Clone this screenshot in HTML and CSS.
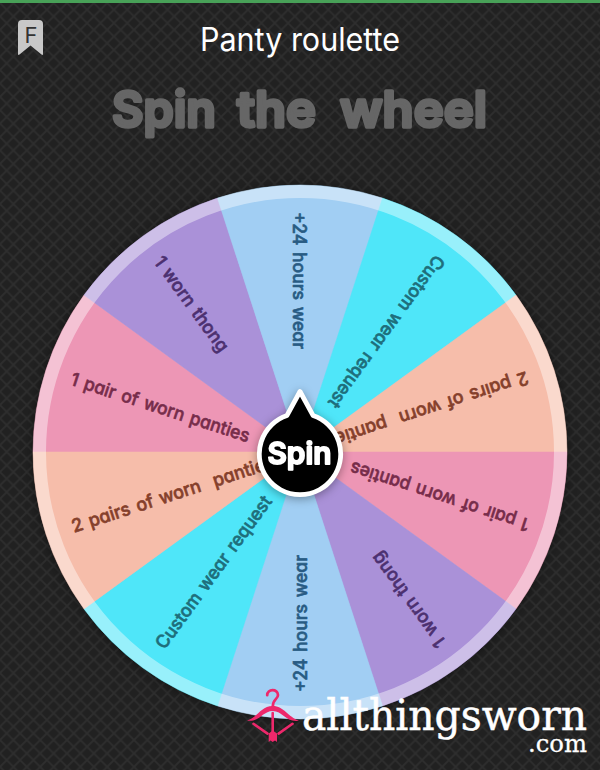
FILE: index.html
```html
<!DOCTYPE html>
<html lang="en">

<head>
  <meta charset="UTF-8">
  <meta name="viewport" content="width=device-width, initial-scale=1.0">
  <title>Panty roulette</title>
  <link rel="stylesheet" href="styles.css">
</head>

<body>
  <svg class="pattern" width="600" height="770">
    <defs>
      <pattern id="mesh" width="13.4" height="13.4" patternUnits="userSpaceOnUse">
        <path d="M-1 -1L14.4 14.4M-1 14.4L14.4 -1" />
      </pattern>
    </defs>
    <rect width="600" height="770" fill="url(#mesh)" />
  </svg>

  <header class="header">
    <svg class="bookmark" width="25" height="36" viewBox="0 0 25 36">
      <path d="M4 0H21Q25 0 25 4V34Q25 35.5 23.5 34.5L12.5 25.5L1.5 34.5Q0 35.5 0 34V4Q0 0 4 0Z" />
      <text x="6.5" y="22.5">F</text>
    </svg>
    <svg class="name" width="230" height="54">
      <text x="15" y="31" textLength="200" lengthAdjust="spacingAndGlyphs">Panty roulette</text>
    </svg>
  </header>

  <svg class="title" width="400" height="66">
    <text x="12" y="49" textLength="104" lengthAdjust="spacingAndGlyphs">Spin</text>
    <text x="137" y="49" textLength="79" lengthAdjust="spacingAndGlyphs">the</text>
    <text x="240" y="49" textLength="147" lengthAdjust="spacingAndGlyphs">wheel</text>
  </svg>

  <main class="wheel-area">
    <svg class="wheel" width="600" height="560" viewBox="-300 -280 600 560">
      <circle class="base" r="266" />
      <g id="slices"></g>
      <circle class="rim" r="260.5" />
      <g id="labels"></g>
      <g class="spin">
        <path d="M0 -60.5L13 -36.6A40.7 40.7 0 1 1 -13 -36.6Z" />
        <text x="-32.5" y="12" textLength="64" lengthAdjust="spacingAndGlyphs">Spin</text>
      </g>
    </svg>
  </main>

  <footer class="brand">
    <svg width="350" height="76">
      <g class="hanger">
        <path d="M18.2 9.2C18 2.5 29 2.5 29 9C29 13.5 23.7 12.5 23.7 21" />
        <path class="solid" d="M-2 34.5C9 31 12 20 23.7 20C35 20 39 31 50 34.7C37 37 34 25 23.7 25C13.500 25 10 37 -2 34.5Z" />
        <path class="thin" d="M23.700 27V46M4.500 37.800L18.500 47.600M43.500 37.800L29.600 47.600" />
        <path class="solid" d="M19.700 47.500L23.700 44.500L28 47.500V56L26 54.500L23.700 56L21.500 54.500L19.700 56Z" />
      </g>
      <text class="brand-name" x="53" y="43.500" textLength="285" lengthAdjust="spacingAndGlyphs">allthingsworn</text>
      <text class="brand-tld" x="279" y="66" textLength="59" lengthAdjust="spacingAndGlyphs">.com</text>
    </svg>
  </footer>

  <script>
    const NS = "http://www.w3.org/2000/svg";
    const RADIUS = 267;

    const prizes = [
      { text: "1 pair of worn panties", type: "pair", width: 187 },
      { text: "1 worn thong", type: "thong", width: 113 },
      { text: "+24 hours wear", type: "hours", width: 137 },
      { text: "Custom wear request", type: "custom", width: 184 },
      { text: "2 pairs of worn \u00a0panties", type: "pairs", width: 212 },
    ];

    const point = (deg) => {
      const rad = (deg * Math.PI) / 180;
      return `${(-RADIUS * Math.cos(rad)).toFixed(2)} ${(-RADIUS * Math.sin(rad)).toFixed(2)}`;
    };

    for (let i = 0; i < 10; i++) {
      const prize = prizes[i % 5];
      const angle = i * 36;

      const slice = document.createElementNS(NS, "path");
      slice.setAttribute("d", `M0 0L${point(angle)}A${RADIUS} ${RADIUS} 0 0 1 ${point(angle + 36)}Z`);
      slice.setAttribute("class", `slice ${prize.type}`);
      document.getElementById("slices").appendChild(slice);

      const label = document.createElementNS(NS, "text");
      label.textContent = prize.text;
      label.setAttribute("x", -240);
      label.setAttribute("y", 7);
      label.setAttribute("textLength", prize.width);
      label.setAttribute("lengthAdjust", "spacingAndGlyphs");
      label.setAttribute("transform", `rotate(${angle + 18})`);
      label.setAttribute("class", `label ${prize.type}-label`);
      document.getElementById("labels").appendChild(label);
    }
  </script>
</body>

</html>
```
FILE: styles.css
```css
* {
  margin: 0;
  padding: 0;
  box-sizing: border-box;
}

body {
  position: relative;
  width: 600px;
  height: 770px;
  overflow: hidden;
  background: #212121;
  border-top: 3px solid #48a158;
  font-family: Inter, "Open Sans", sans-serif;
}

svg {
  display: block;
}

/* Background mesh */
.pattern {
  position: absolute;
  top: 0;
  left: 0;
  z-index: -1;
}

.pattern path {
  fill: none;
  stroke: #2e2e2e;
  stroke-width: 1.7;
}

/* Header */
.header {
  display: grid;
  grid-template-columns: 150px 230px;
  column-gap: 17px;
  padding: 17px 0 0 18px;
  height: 75px;
}

.bookmark path {
  fill: #c8c8c8;
}

.bookmark text {
  font-size: 22px;
  fill: #333;
}

.name text {
  font-size: 32px;
  fill: #fff;
}

.title {
  margin: 0 100px;
}

.title text {
  font-size: 50px;
  font-weight: 600;
  fill: #666;
  stroke: #666;
  stroke-width: 3.5;
  stroke-linejoin: round;
}

/* Wheel */
.wheel-area {
  margin-top: 28px;
  height: 560px;
}

.wheel {
  overflow: visible;
}

.base {
  fill: #a1cef3;
  filter: drop-shadow(0 1px 6px rgba(0, 0, 0, 0.5));
}

.slice {
  stroke-width: 0.5;
}

.pair {
  fill: #ed96b5;
  stroke: #ed96b5;
}

.thong {
  fill: #aa91d8;
  stroke: #aa91d8;
}

.hours {
  fill: #a1cef3;
  stroke: #a1cef3;
}

.custom {
  fill: #4fe6f9;
  stroke: #4fe6f9;
}

.pairs {
  fill: #f6bdaa;
  stroke: #f6bdaa;
}

.rim {
  fill: none;
  stroke: #fff;
  stroke-width: 13;
  opacity: 0.42;
}

.label {
  font-size: 18.3px;
  font-weight: 500;
  font-feature-settings: "cv11";
  word-spacing: 2px;
  white-space: pre;
  stroke-width: 0.6;
  stroke-linejoin: round;
}

.pair-label {
  fill: #762c4a;
  stroke: #762c4a;
}

.thong-label {
  fill: #4c3070;
  stroke: #4c3070;
}

.hours-label {
  fill: #285b83;
  stroke: #285b83;
}

.custom-label {
  fill: #1e6e7b;
  stroke: #1e6e7b;
}

.pairs-label {
  fill: #85402b;
  stroke: #85402b;
}

.spin {
  filter: drop-shadow(0 2px 5px rgba(0, 0, 0, 0.35));
}

.spin path {
  fill: #000;
  stroke: #fff;
  stroke-width: 4.8;
  stroke-linejoin: round;
}

.spin text {
  font-size: 30px;
  font-weight: 600;
  fill: #fff;
  stroke: #fff;
  stroke-width: 1.8;
  stroke-linejoin: round;
}

/* Site logo over the wheel */
.brand {
  position: absolute;
  left: 249px;
  top: 683px;
}

.brand svg {
  overflow: visible;
}

.hanger path {
  fill: none;
  stroke: #ed286b;
  stroke-width: 2.7;
  stroke-linecap: round;
}

.hanger .solid {
  fill: #ed286b;
  stroke: none;
}

.hanger .thin {
  stroke-width: 2.6;
}

.brand text {
  font-family: "DejaVu Serif", serif;
  fill: #fff;
  stroke: #fff;
  stroke-width: 0.5;
}

.brand .brand-name {
  font-size: 42px;
}

.brand .brand-tld {
  font-size: 25px;
  stroke-width: 0.3;
}
```
